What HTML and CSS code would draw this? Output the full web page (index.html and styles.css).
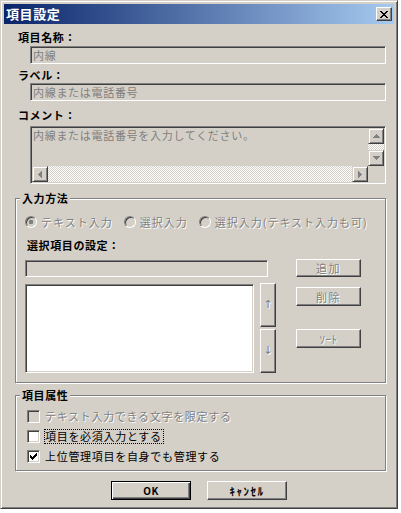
FILE: index.html
```html
<!DOCTYPE html>
<html lang="ja">
<head>
<meta charset="utf-8">
<title>項目設定</title>
<link rel="stylesheet" href="styles.css">
</head>
<body>
<div class="window">
  <div class="titlebar">
    <span class="title">項目設定</span>
    <span class="close raised">
      <svg width="8" height="7" viewBox="0 0 8 7"><path d="M0 0h2v1H0zM6 0h2v1H6zM1 1h2v1H1zM5 1h2v1H5zM2 2h4v1H2zM3 3h2v1H3zM2 4h4v1H2zM1 5h2v1H1zM5 5h2v1H5zM0 6h2v1H0zM6 6h2v1H6z" fill="#000"/></svg>
    </span>
  </div>
  <div class="client">
    <div class="label lbl-first">項目名称：</div>
    <div class="field sunken field-top">内線</div>
    <div class="label lbl-second">ラベル：</div>
    <div class="field sunken field-tight">内線または電話番号</div>
    <div class="label lbl-third">コメント：</div>
    <div class="memo sunken">
      <div class="memo-main">
        <div class="memo-text">内線または電話番号を入力してください。</div>
        <div class="vscroll">
          <span class="sbtn"><svg width="7" height="4" viewBox="0 0 7 4"><path d="M3 0h1v1H3zM2 1h3v1H2zM1 2h5v1H1zM0 3h7v1H0z" fill="#808080"/></svg></span>
          <span class="vtrack"></span>
          <span class="sbtn"><svg width="7" height="4" viewBox="0 0 7 4"><path d="M0 0h7v1H0zM1 1h5v1H1zM2 2h3v1H2zM3 3h1v1H3z" fill="#808080"/></svg></span>
        </div>
      </div>
      <div class="memo-bottom">
        <span class="sbtn"><svg width="4" height="7" viewBox="0 0 4 7"><path d="M3 0h1v7H3zM2 1h1v5H2zM1 2h1v3H1zM0 3h1v1H0z" fill="#808080"/></svg></span>
        <span class="htrack"></span>
        <span class="sbtn"><svg width="4" height="7" viewBox="0 0 4 7"><path d="M0 0h1v7H0zM1 1h1v5H1zM2 2h1v3H2zM3 3h1v1H3z" fill="#808080"/></svg></span>
        <span class="corner"></span>
      </div>
    </div>

    <div class="group group-input">
      <div class="group-title">入力方法</div>
      <div class="radios">
        <span class="option"><span class="radio on"></span><span class="dim">テキスト入力</span></span>
        <span class="option"><span class="radio"></span><span class="dim">選択入力</span></span>
        <span class="option"><span class="radio"></span><span class="dim">選択入力(テキスト入力も可)</span></span>
      </div>
      <div class="label sub">選択項目の設定：</div>
      <div class="item-row">
        <div class="field sunken field-item"></div>
        <span class="btn raised disabled btn-add">追加</span>
      </div>
      <div class="list-row">
        <div class="listbox sunken"></div>
        <div class="move-btns">
          <span class="btn raised disabled move">↑</span>
          <span class="btn raised disabled move">↓</span>
        </div>
        <div class="side-btns">
          <span class="btn raised disabled btn-del">削除</span>
          <span class="btn raised disabled btn-sort">ｿｰﾄ</span>
        </div>
      </div>
    </div>

    <div class="group group-attr">
      <div class="group-title">項目属性</div>
      <div class="check-row row-a">
        <span class="check sunken off"></span>
        <span class="dim">テキスト入力できる文字を限定する</span>
      </div>
      <div class="check-row row-b">
        <span class="check sunken"></span>
        <span class="focus">項目を必須入力とする</span>
      </div>
      <div class="check-row row-c">
        <span class="check sunken"><svg width="7" height="7" viewBox="0 0 7 7"><path d="M6 0h1v1H6zM5 1h2v1H5zM0 2h1v1H0zM4 2h3v1H4zM0 3h2v1H0zM3 3h3v1H3zM0 4h5v1H0zM1 5h3v1H1zM2 6h1v1H2z" fill="#000"/></svg></span>
        <span class="check-text">上位管理項目を自身でも管理する</span>
      </div>
    </div>

    <div class="actions">
      <span class="btn default btn-ok">OK</span>
      <span class="btn raised btn-cancel">ｷｬﾝｾﾙ</span>
    </div>
  </div>
</div>
</body>
</html>
```

FILE: styles.css
```css
* {
  box-sizing: border-box;
}

html,
body {
  margin: 0;
  padding: 0;
  background: #ffffff;
}

body {
  font-family: "Noto Sans CJK JP", "Noto Sans", sans-serif;
  font-size: 11px;
  color: #000000;
}

.window {
  width: 398px;
  height: 509px;
  background: #d4d0c8;
  border: 1px solid;
  border-color: #d4d0c8 #404040 #404040 #d4d0c8;
  box-shadow: inset 1px 1px 0 #ffffff, inset -1px -1px 0 #808080;
  padding: 3px;
}

/* bevels */
.sunken {
  border: 1px solid;
  border-color: #808080 #ffffff #ffffff #808080;
  box-shadow: inset 1px 1px 0 #404040, inset -1px -1px 0 #d4d0c8;
}

.raised {
  border: 1px solid;
  border-color: #ffffff #404040 #404040 #ffffff;
  box-shadow: inset -1px -1px 0 #808080;
}

/* title bar */
.titlebar {
  height: 20px;
  display: flex;
  align-items: center;
  justify-content: space-between;
  padding: 0 2px;
  background: linear-gradient(to right, #0a246a, #a6caf0);
}

.title {
  color: #ffffff;
  font-weight: bold;
  font-size: 13px;
  letter-spacing: 0.6px;
  line-height: 16px;
}

.close {
  width: 16px;
  height: 14px;
  display: flex;
  align-items: center;
  justify-content: center;
  background: #d4d0c8;
}

/* labels & fields */
.label {
  font-weight: bold;
  line-height: 14px;
  height: 14px;
  letter-spacing: 0.6px;
  padding-left: 14px;
}

.lbl-first {
  margin-top: 6px;
}

.lbl-second {
  margin-top: 4px;
}

.lbl-third {
  margin-top: 7px;
}

.field {
  margin-left: 26px;
  width: 356px;
  height: 18px;
  padding: 1px 2px;
  line-height: 14px;
  color: #808080;
  background: #d4d0c8;
  letter-spacing: 0.7px;
}

.field-top {
  margin-top: 2px;
}

.field-tight {
  margin-top: 1px;
}

/* memo */
.memo {
  margin: 4px 0 0 26px;
  width: 356px;
  height: 58px;
  padding: 1px;
  background: #d4d0c8;
  display: flex;
  flex-direction: column;
}

.memo-main {
  display: flex;
  height: 38px;
}

.memo-text {
  flex: 1;
  color: #808080;
  padding-left: 1px;
  line-height: 14px;
  letter-spacing: 0.7px;
}

.vscroll {
  width: 16px;
  display: flex;
  flex-direction: column;
}

.sbtn {
  flex: none;
  width: 16px;
  height: 16px;
  display: flex;
  align-items: center;
  justify-content: center;
  background: #d4d0c8;
  border: 1px solid;
  border-color: #d4d0c8 #404040 #404040 #d4d0c8;
  box-shadow: inset 1px 1px 0 #ffffff, inset -1px -1px 0 #808080;
}

.vtrack,
.htrack {
  background-color: #d4d0c8;
  background-image: repeating-conic-gradient(#ffffff 0 25%, #d4d0c8 0 50%);
  background-size: 2px 2px;
}

.vtrack {
  height: 6px;
}

.memo-bottom {
  display: flex;
  height: 16px;
}

.htrack {
  flex: 1;
}

.corner {
  width: 16px;
  flex: none;
}

/* group boxes */
.group {
  margin-left: 11px;
  width: 371px;
  border: 1px solid #808080;
  box-shadow: 1px 1px 0 #ffffff, inset 1px 1px 0 #ffffff;
}

.group-input {
  margin-top: 14px;
  padding-bottom: 9px;
}

.group-attr {
  margin-top: 12px;
  padding-bottom: 7px;
}

.group-title {
  width: max-content;
  margin: -8px 0 0 4px;
  padding: 0 2px;
  background: #d4d0c8;
  font-weight: bold;
  line-height: 14px;
  letter-spacing: 0.6px;
}

.dim {
  color: #808080;
  text-shadow: 1px 1px 0 #ffffff;
  letter-spacing: 0.7px;
}

/* radios */
.radios {
  margin-top: 10px;
  padding-left: 9px;
  display: flex;
  gap: 11px;
  line-height: 14px;
  height: 14px;
}

.radios .dim {
  letter-spacing: 1px;
}

.option {
  display: flex;
  align-items: center;
  gap: 4px;
}

.radio {
  flex: none;
  width: 12px;
  height: 12px;
  border-radius: 50%;
  border: 1px solid;
  border-color: #808080 #ffffff #ffffff #808080;
  box-shadow: inset 1px 1px 0 #404040, inset -1px -1px 0 #d4d0c8;
  background: #d4d0c8;
}

.radio.on {
  background: radial-gradient(circle, #808080 0 2px, #d4d0c8 2.6px);
}

.sub {
  margin-top: 9px;
  padding-left: 11px;
}

/* item row */
.item-row {
  margin-top: 7px;
  display: flex;
  align-items: flex-start;
}

.field-item {
  margin: 1px 0 0 9px;
  width: 243px;
  height: 17px;
}

.btn {
  display: flex;
  align-items: center;
  justify-content: center;
  background: #d4d0c8;
  line-height: 14px;
  letter-spacing: 1.5px;
}

.btn.disabled {
  color: #808080;
  text-shadow: 1px 1px 0 #ffffff;
}

.btn-add {
  margin-left: 28px;
  width: 65px;
  height: 18px;
}

/* list row */
.list-row {
  margin-top: 6px;
  display: flex;
  align-items: flex-start;
}

.listbox {
  margin: 1px 0 0 9px;
  width: 229px;
  height: 89px;
  padding: 1px;
  background: #ffffff;
}

.move-btns {
  margin-left: 6px;
  display: flex;
  flex-direction: column;
  gap: 2px;
}

.move {
  width: 16px;
  height: 44px;
  font-family: "DejaVu Sans", sans-serif;
  font-size: 11px;
  letter-spacing: 0;
}

.side-btns {
  margin-left: 20px;
  display: flex;
  flex-direction: column;
}

.btn-del {
  margin-top: 4px;
  width: 65px;
  height: 19px;
}

.btn-sort {
  margin-top: 23px;
  width: 65px;
  height: 19px;
  letter-spacing: 0.5px;
}

/* check rows */
.check-row {
  display: flex;
  align-items: center;
  padding-left: 11px;
  gap: 5px;
  line-height: 14px;
}

.row-a {
  margin-top: 7px;
  height: 14px;
}

.row-b {
  margin-top: 6px;
  height: 15px;
  gap: 4px;
}

.row-c {
  margin-top: 5px;
  height: 14px;
}

.check {
  flex: none;
  width: 13px;
  height: 13px;
  background: #ffffff;
  display: flex;
  align-items: center;
  justify-content: center;
}

.check.off {
  background: #d4d0c8;
}

.focus {
  border: 1px dotted #000000;
  line-height: 13px;
  padding-right: 1px;
  letter-spacing: 0.7px;
}

.check-text {
  letter-spacing: 0.7px;
}

/* actions */
.actions {
  margin-top: 10px;
  display: flex;
  justify-content: center;
  gap: 16px;
}

.btn-ok,
.btn-cancel {
  width: 80px;
  height: 19px;
  font-weight: bold;
  font-size: 10px;
}

.btn.default {
  border: 1px solid #000000;
  box-shadow: inset 1px 1px 0 #ffffff, inset -1px -1px 0 #404040, inset -2px -2px 0 #808080;
  letter-spacing: 0.5px;
}

.btn-cancel {
  font-size: 11px;
  letter-spacing: 1.5px;
}
```
